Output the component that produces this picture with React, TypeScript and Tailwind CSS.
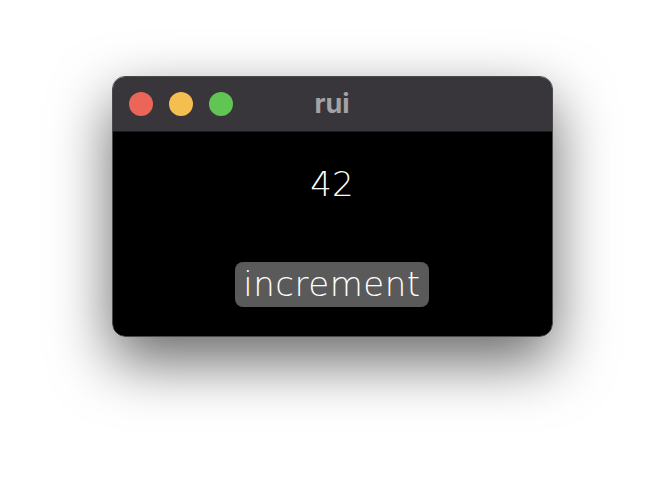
export default function App() {
  const count = 42;

  return (
    <div className="w-[664px] h-[484px] bg-white pt-[76px] overflow-hidden">
      <div className="mx-auto w-[441px] h-[261px] rounded-[13px] border border-[#4a4a4a] overflow-hidden flex flex-col shadow-[0_24px_60px_rgba(0,0,0,0.6)]">
        <div className="h-[55px] bg-[#38363b] flex items-center relative shrink-0 border-b border-[#1a1a1a]">
          <div className="flex items-center gap-4 pl-4">
            <span className="w-6 h-6 rounded-full bg-[#ec6559]" />
            <span className="w-6 h-6 rounded-full bg-[#f4bf4f]" />
            <span className="w-6 h-6 rounded-full bg-[#61c554]" />
          </div>
          <p className="absolute inset-0 flex items-center justify-center text-[27px] font-bold text-[#a3a3a6] font-['Inter',sans-serif]">
            rui
          </p>
        </div>

        <div className="flex-1 bg-black flex flex-col items-center font-['DejaVu_Sans',sans-serif] font-extralight">
          <p className="mt-[35px] text-[34px] leading-[34px] text-white">{count}</p>
          <button className="mt-[61px] h-[45px] px-[8px] rounded-[8px] bg-[#5a5a5a] text-[34px] leading-[45px] tracking-[0.5px] text-white">
            increment
          </button>
        </div>
      </div>
    </div>
  );
}
